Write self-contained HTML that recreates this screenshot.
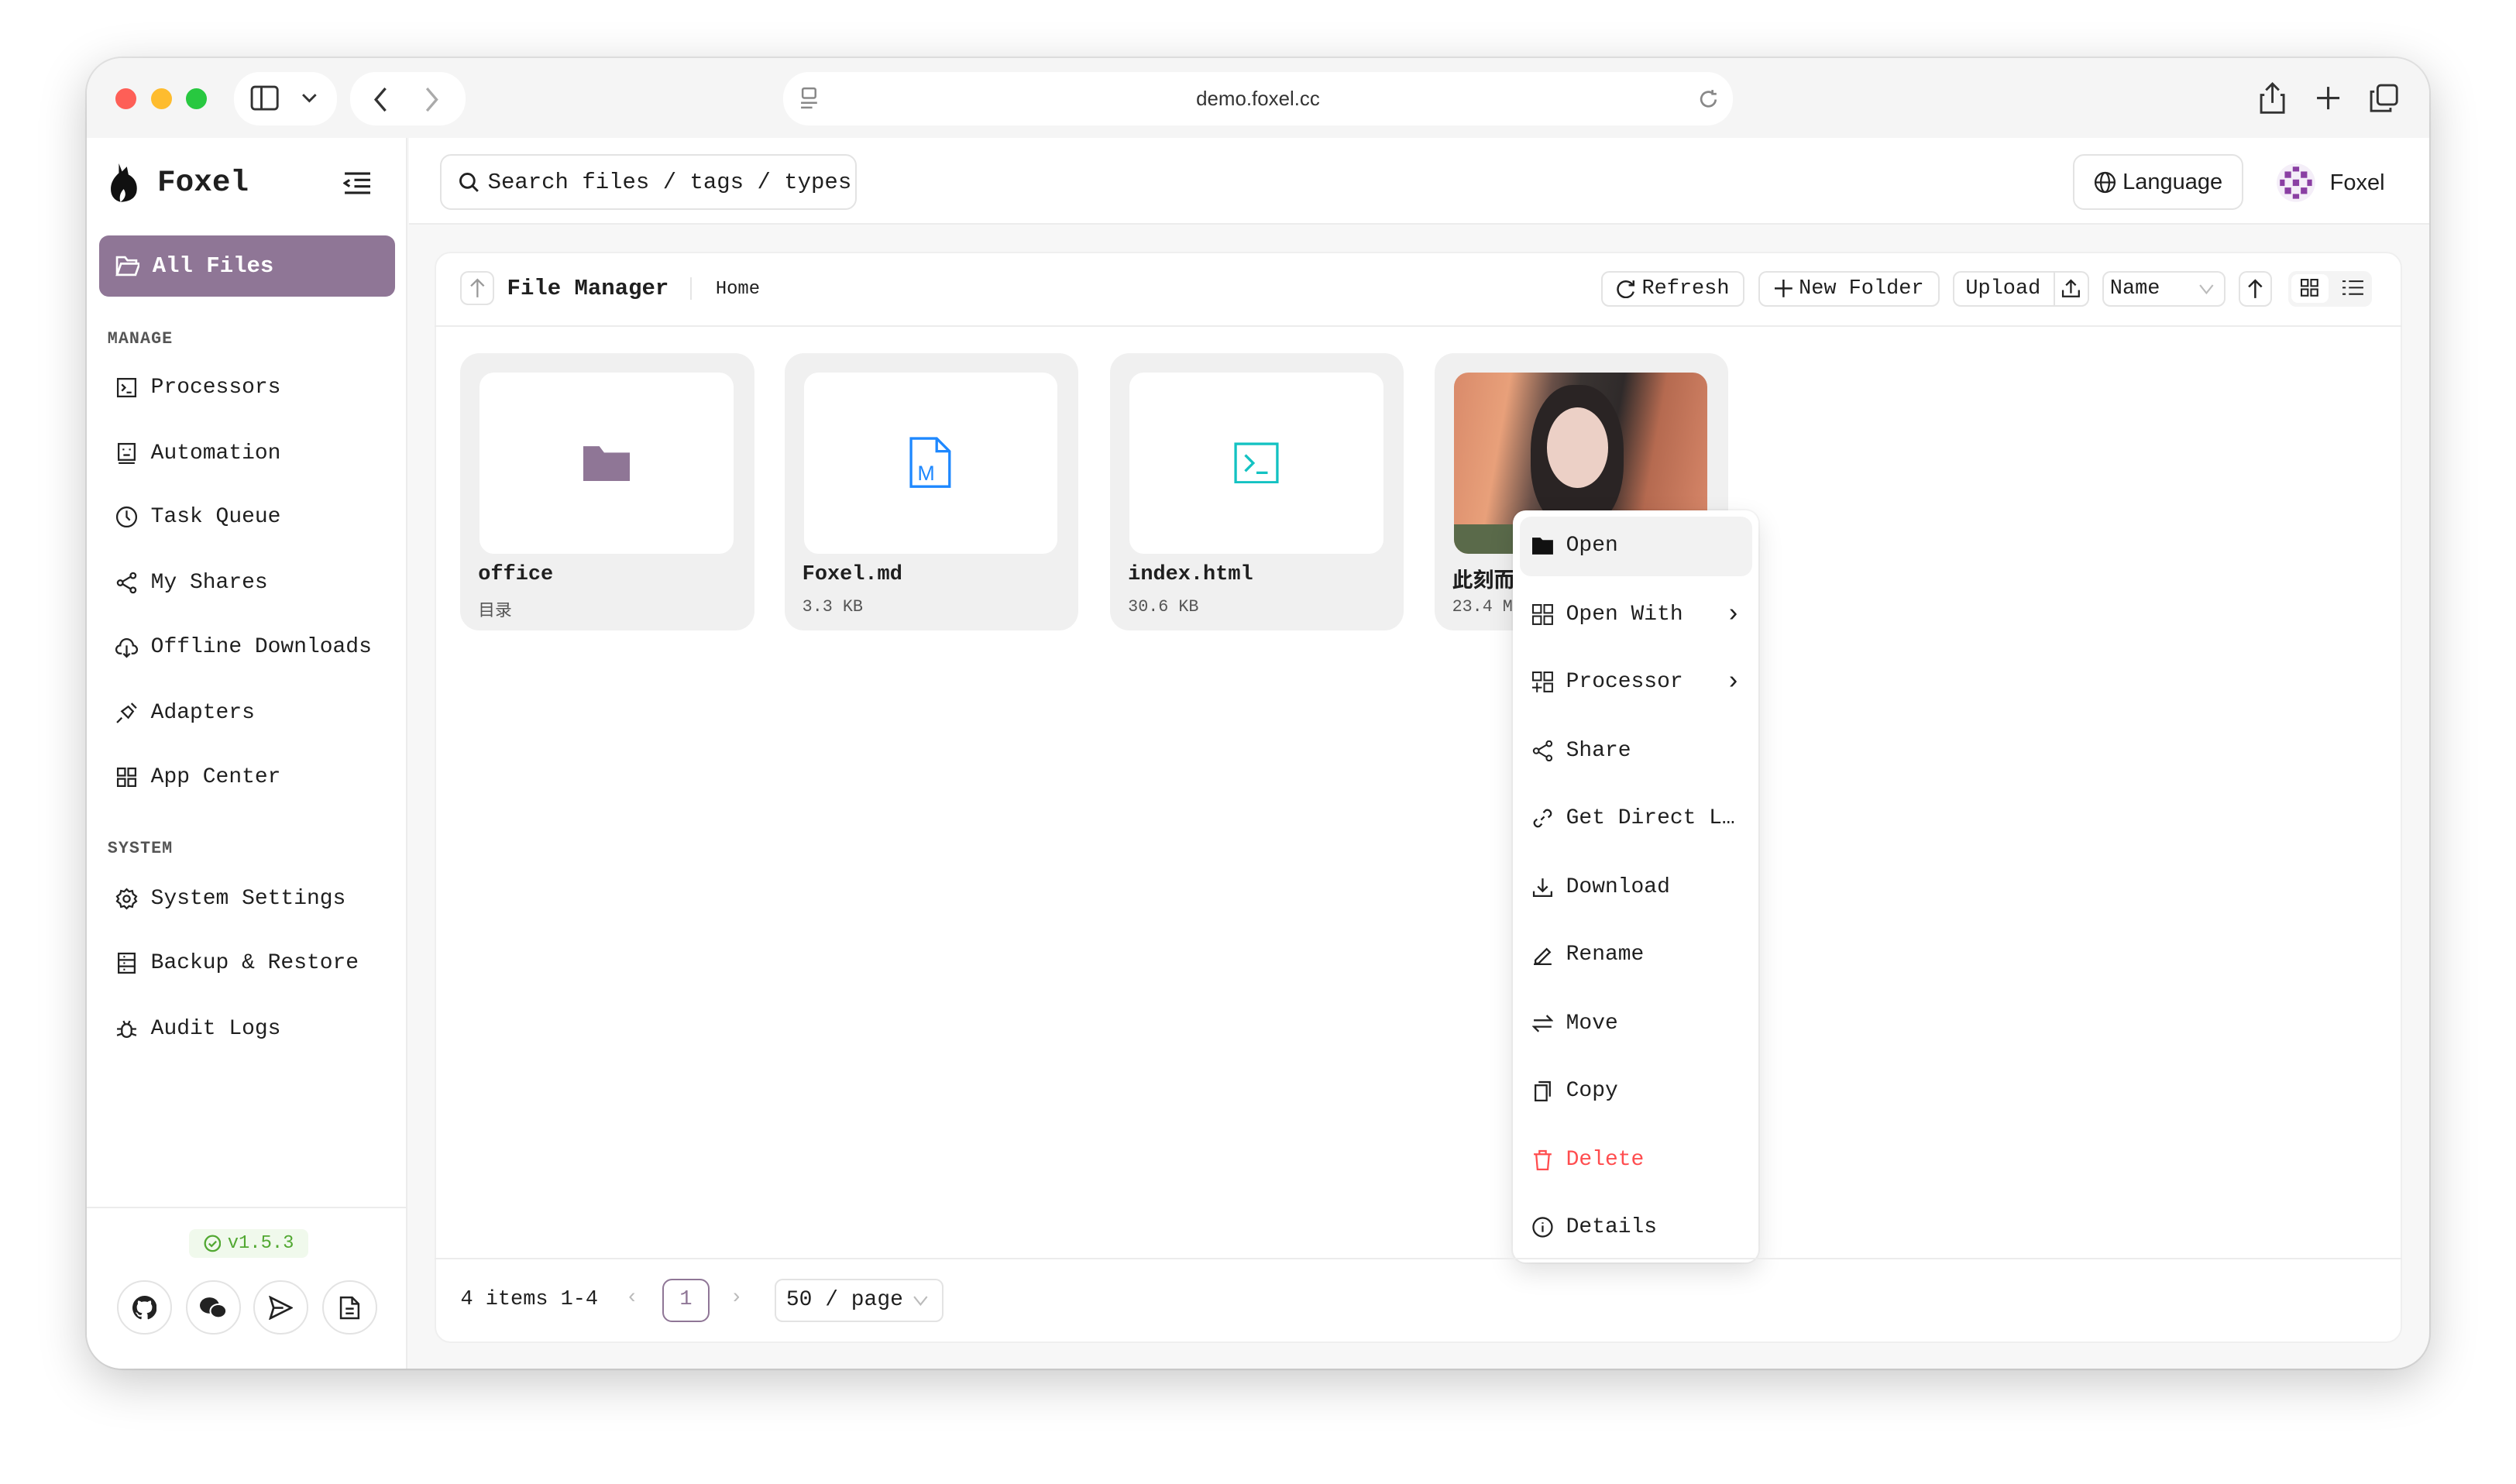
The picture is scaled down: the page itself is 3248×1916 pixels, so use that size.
<!DOCTYPE html>
<html><head><meta charset="utf-8"><style>
*{box-sizing:border-box;margin:0;padding:0}
html,body{width:3248px;height:1916px;background:#fff;overflow:hidden}
#z{zoom:2.0714;width:1568px;height:925px;position:relative;font-family:"Liberation Mono","Noto Sans CJK SC",monospace;color:#1f1f1f}
.a{position:absolute}
.win{left:54px;top:36px;width:1460px;height:817px;border-radius:22px;background:#f7f7f7;box-shadow:0 8px 30px rgba(0,0,0,.22),0 0 0 1px rgba(0,0,0,.08);overflow:hidden}
.tb{left:0;top:0;width:1460px;height:50px;background:#f5f5f5}
.dot{width:13px;height:13px;border-radius:50%;top:19px}
.pill{background:#fff;border-radius:16px;height:33px;top:9px}
.side{left:0;top:50px;width:200px;height:767px;background:#fff;border-right:1px solid #ececec}
.ni{left:18px;font-size:13.5px;display:flex;align-items:center;gap:8px}
.ni svg{width:14px;height:14px}
.sec{left:13px;font-size:10.5px;color:#555;font-weight:bold;letter-spacing:.5px}
.btn{border:1px solid #e3e3e3;border-radius:5px;background:#fff;height:22px;font-size:13px;display:flex;align-items:center;justify-content:center;gap:4px}
.card{top:184px;width:183px;height:173px;background:#f0f0f0;border-radius:12px}
.card .th{position:absolute;left:12px;top:12px;width:158px;height:113px;background:#fff;border-radius:9px;display:flex;align-items:center;justify-content:center}
.card .n{position:absolute;left:11px;top:131px;font-size:13px;font-weight:bold}
.card .s{position:absolute;left:11px;top:152px;font-size:10.5px;color:#555}
.mi{left:10px;width:150px;height:38px;font-size:13.5px;display:flex;align-items:center;gap:8px;padding-left:2px}
.mi svg{width:13px;height:13px}
.ch{margin-left:auto;margin-right:18px;font-size:16px}
.ic{width:34px;height:34px;border-radius:50%;border:1px solid #e3e3e3;top:762px;display:flex;align-items:center;justify-content:center;background:#fff}
</style></head><body><div id="z">
<div class="a win">
 <div class="a tb"></div>
 <div class="a dot" style="left:18px;background:#fe5f57"></div>
 <div class="a dot" style="left:40px;background:#febc2e"></div>
 <div class="a dot" style="left:62px;background:#28c840"></div>
 <div class="a pill" style="left:92px;width:64px"><svg class="a" style="left:10px;top:8px" width="18" height="16" viewBox="0 0 18 16" fill="none" stroke="#333" stroke-width="1.4"><rect x="1" y="1" width="16" height="14" rx="2"/><path d="M7 1v14"/></svg><svg class="a" style="left:42px;top:12px" width="10" height="8"><path d="M1 2l4 4 4-4" stroke="#333" stroke-width="1.4" fill="none"/></svg></div>
 <div class="a pill" style="left:164px;width:72px"><svg class="a" style="left:14px;top:9px" width="10" height="16"><path d="M8 1L2 8l6 7" stroke="#333" stroke-width="1.6" fill="none"/></svg><svg class="a" style="left:46px;top:9px" width="10" height="16"><path d="M2 1l6 7-6 7" stroke="#aaa" stroke-width="1.6" fill="none"/></svg></div>
 <div class="a pill" style="left:434px;width:592px"><div class="a" style="left:0;width:592px;top:10px;text-align:center;font-family:'Liberation Sans',sans-serif;font-size:12.5px;color:#333">demo.foxel.cc</div><svg class="a" style="left:10px;top:9px" width="12" height="14" fill="none" stroke="#888" stroke-width="1.2"><rect x="2" y="1" width="8" height="6" rx="1"/><path d="M1 10h10M1 13h7"/></svg><svg class="a" style="left:570px;top:10px" width="13" height="13" fill="none" stroke="#888" stroke-width="1.3"><path d="M11 7a4.5 4.5 0 1 1-2-4M9 1v2.5h2.5"/></svg></div>
 <svg class="a" style="left:1354px;top:15px" width="16" height="20" fill="none" stroke="#333" stroke-width="1.4"><path d="M8 1v12M4 5l4-4 4 4M3 8H1v11h14V8h-2"/></svg>
 <svg class="a" style="left:1389px;top:17px" width="16" height="16" stroke="#333" stroke-width="1.5"><path d="M8 1v14M1 8h14"/></svg>
 <svg class="a" style="left:1423px;top:16px" width="18" height="18" fill="none" stroke="#333" stroke-width="1.4"><rect x="5" y="1" width="12" height="12" rx="2"/><path d="M3 5H1v12h12v-2"/></svg>

 <div class="a side">
  <svg class="a" style="left:14px;top:16px" width="20" height="24" viewBox="0 0 20 24"><path d="M6 0l2 5 3-3 1 5c4 2 6 6 5 11-1 4-5 6-10 6 3-2 4-5 2-8-2 2-3 5-2 8-4-1-6-4-6-8 0-5 3-8 5-10z" fill="#111"/></svg>
  <div class="a" style="left:44px;top:17px;font-size:19px;font-weight:bold">Foxel</div>
  <svg class="a" style="left:160px;top:21px" width="17" height="14" stroke="#222" stroke-width="1.5" fill="none"><path d="M1 1h16M7 5h10M7 9h10M1 13h16M4 5L1 7l3 2"/></svg>
  <div class="a" style="left:8px;top:61px;width:184px;height:38px;background:#8f7696;border-radius:6px;color:#fff;font-size:14px;font-weight:bold;display:flex;align-items:center;gap:8px;padding-left:10px"><svg width="15" height="13" fill="none" stroke="#fff" stroke-width="1.3"><path d="M1 12V1h5l1.5 2H13v2M1 12l2.5-7H15l-2.5 7z"/></svg>All Files</div>
  <div class="a sec" style="top:119px">MANAGE</div>
  <div class="a ni" style="top:148px"><svg viewBox="0 0 14 14" fill="none" stroke="#222" stroke-width="1.1"><rect x="1.5" y="1.5" width="11" height="11"/><path d="M4 5l2 2-2 2M7 10h3"/></svg>Processors</div>
  <div class="a ni" style="top:189px"><svg viewBox="0 0 14 14" fill="none" stroke="#222" stroke-width="1.1"><rect x="2" y="1" width="10" height="10"/><path d="M5 4v1M9 4v1M5 8h4M2 13h10"/></svg>Automation</div>
  <div class="a ni" style="top:229px"><svg viewBox="0 0 14 14" fill="none" stroke="#222" stroke-width="1.1"><circle cx="7" cy="7" r="6"/><path d="M7 3v4l2 2"/></svg>Task Queue</div>
  <div class="a ni" style="top:270px"><svg viewBox="0 0 14 14" fill="none" stroke="#222" stroke-width="1.1"><circle cx="3" cy="7" r="1.6"/><circle cx="11" cy="2.5" r="1.6"/><circle cx="11" cy="11.5" r="1.6"/><path d="M4.5 6.2l5-3M4.5 7.8l5 3"/></svg>My Shares</div>
  <div class="a ni" style="top:310px"><svg viewBox="0 0 14 14" fill="none" stroke="#222" stroke-width="1.1"><path d="M4 11H3a2.5 2.5 0 0 1 0-5 4 4 0 0 1 8 0 2.5 2.5 0 0 1 0 5h-1M7 6v7M5 11l2 2 2-2"/></svg>Offline Downloads</div>
  <div class="a ni" style="top:351px"><svg viewBox="0 0 14 14" fill="none" stroke="#222" stroke-width="1.1"><path d="M1 13l3-3M5 7l2 2M8 3l3 3-3 4-4-4zM10 1l3 3"/></svg>Adapters</div>
  <div class="a ni" style="top:391px"><svg viewBox="0 0 14 14" fill="none" stroke="#222" stroke-width="1.1"><rect x="1.5" y="1.5" width="4.5" height="4.5"/><rect x="8" y="1.5" width="4.5" height="4.5"/><rect x="1.5" y="8" width="4.5" height="4.5"/><rect x="8" y="8" width="4.5" height="4.5"/></svg>App Center</div>
  <div class="a sec" style="top:437px">SYSTEM</div>
  <div class="a ni" style="top:467px"><svg viewBox="0 0 14 14" fill="none" stroke="#222" stroke-width="1.1"><circle cx="7" cy="7" r="2"/><path d="M7 1l1.5 1.5 2-.5.5 2L13 5.5 12 7l1 1.5-2 1.5-.5 2-2-.5L7 13l-1.5-1.5-2 .5-.5-2L1 8.5 2 7 1 5.5 3 4l.5-2 2 .5z"/></svg>System Settings</div>
  <div class="a ni" style="top:507px"><svg viewBox="0 0 14 14" fill="none" stroke="#222" stroke-width="1.1"><rect x="2" y="1" width="10" height="12"/><path d="M2 5h10M2 9h10M5 3h1M5 7h1M5 11h1"/></svg>Backup &amp; Restore</div>
  <div class="a ni" style="top:548px"><svg viewBox="0 0 14 14" fill="none" stroke="#222" stroke-width="1.1"><rect x="4" y="4" width="6" height="8" rx="3"/><path d="M5 2l1 2M9 2L8 4M1 7h3M10 7h3M1 11l3-1M13 11l-3-1"/></svg>Audit Logs</div>
  <div class="a" style="left:0;top:666px;width:200px;border-top:1px solid #ececec"></div>
  <div class="a" style="left:64px;top:680px;width:74px;height:18px;background:#f0f9ec;border-radius:4px;color:#52a832;font-size:11.5px;display:flex;align-items:center;justify-content:center;gap:4px"><svg width="11" height="11" fill="none" stroke="#52a832" stroke-width="1.1"><circle cx="5.5" cy="5.5" r="4.7"/><path d="M3.3 5.6l1.6 1.6 2.9-3"/></svg>v1.5.3</div>
 </div>
 <div class="a ic" style="left:19px"><svg width="15" height="15" viewBox="0 0 16 16"><path d="M8 0a8 8 0 0 0-2.5 15.6c.4 0 .5-.2.5-.4v-1.4c-2.2.5-2.7-1-2.7-1-.4-.9-.9-1.2-.9-1.2-.7-.5.1-.5.1-.5.8.1 1.2.8 1.2.8.7 1.2 1.900.9 2.3.7.1-.5.3-.9.5-1.1-1.8-.2-3.6-.9-3.600-4 0-.9.3-1.6.8-2.1-.1-.2-.4-1 .1-2.1 0 0 .7-.2 2.2.8a7.5 7.5 0 0 1 4 0c1.5-1 2.2-.8 2.2-.8.4 1.100.2 1.9.1 2.1.5.6.8 1.3.8 2.1 0 3.1-1.9 3.8-3.6 4 .3.3.6.8.6 1.5v2.2c0 .2.1.5.6.4A8 8 0 0 0 8 0z" fill="#222"/></svg></div>
 <div class="a ic" style="left:62px"><svg width="17" height="15" viewBox="0 0 17 15"><ellipse cx="6" cy="6" rx="6" ry="5" fill="#222"/><ellipse cx="11.5" cy="9.5" rx="5" ry="4.2" fill="#222" stroke="#fff" stroke-width="1"/></svg></div>
 <div class="a ic" style="left:104px"><svg width="15" height="15" fill="none" stroke="#222" stroke-width="1.3"><path d="M1 1l13 6.5L1 14l2-6.5zM3 7.5h6"/></svg></div>
 <div class="a ic" style="left:147px"><svg width="13" height="15" fill="none" stroke="#222" stroke-width="1.2"><path d="M1 1h7l4 4v9H1zM8 1v4h4M4 8h5M4 11h5"/></svg></div>

 <!-- header -->
 <div class="a" style="left:201px;top:50px;width:1259px;height:54px;background:#fff;border-bottom:1px solid #ececec"></div>
 <div class="a btn" style="left:220px;top:60px;width:260px;height:35px;border-radius:7px;font-size:14px;justify-content:flex-start;padding-left:11px;gap:5px"><svg width="13" height="13" fill="none" stroke="#222" stroke-width="1.4"><circle cx="5.5" cy="5.5" r="4.3"/><path d="M8.5 8.5L12 12"/></svg>Search files / tags / types</div>
 <div class="a btn" style="left:1238px;top:60px;width:106px;height:35px;border-radius:7px;font-family:'Liberation Sans',sans-serif;font-size:14px"><svg width="14" height="14" fill="none" stroke="#222" stroke-width="1.1"><circle cx="7" cy="7" r="6"/><ellipse cx="7" cy="7" rx="2.6" ry="6"/><path d="M1 7h12"/></svg>Language</div>
 <svg class="a" style="left:1364px;top:65px" width="26" height="26" viewBox="0 0 26 26"><circle cx="13" cy="13" r="12" fill="#f4eef8"/><g fill="#8a3fa3"><rect x="6" y="6" width="4" height="4"/><rect x="16" y="6" width="4" height="4"/><rect x="11" y="11" width="4" height="4"/><rect x="6" y="16" width="4" height="4"/><rect x="16" y="16" width="4" height="4"/><rect x="11" y="3" width="4" height="3"/><rect x="11" y="20" width="4" height="3"/><rect x="3" y="11" width="3" height="4"/><rect x="20" y="11" width="3" height="4"/></g></svg>
 <div class="a" style="left:1398px;top:70px;font-family:'Liberation Sans',sans-serif;font-size:14px">Foxel</div>

 <!-- content card -->
 <div class="a" style="left:217px;top:121px;width:1226px;height:680px;background:#fff;border-radius:10px;border:1px solid #efefef"></div>
 <div class="a" style="left:217px;top:167px;width:1226px;border-top:1px solid #ececec"></div>
 <div class="a btn" style="left:233px;top:133px;width:21px;height:21px"><svg width="10" height="12" fill="none" stroke="#999" stroke-width="1.1"><path d="M5 12V1M1 5l4-4 4 4"/></svg></div>
 <div class="a" style="left:262px;top:136px;font-size:14px;font-weight:bold">File Manager</div>
 <div class="a" style="left:376px;top:137px;height:14px;border-left:1px solid #e5e5e5"></div>
 <div class="a" style="left:392px;top:138px;font-size:11.5px">Home</div>
 <div class="a btn" style="left:944px;top:133px;width:89px"><svg width="12" height="12" fill="none" stroke="#222" stroke-width="1.2"><path d="M10.5 4A5 5 0 1 0 11 8"/><path d="M11 1v3H8"/></svg>Refresh</div>
 <div class="a btn" style="left:1042px;top:133px;width:113px"><svg width="11" height="11" stroke="#222" stroke-width="1.2"><path d="M5.5 0v11M0 5.5h11"/></svg>New Folder</div>
 <div class="a btn" style="left:1163px;top:133px;width:85px;justify-content:flex-start;padding-left:7px">Upload<span style="border-left:1px solid #e3e3e3;height:20px;margin-left:4px"></span><svg width="12" height="12" fill="none" stroke="#222" stroke-width="1.1"><path d="M6 9V1M3 4l3-3 3 3M1 7v4h10V7"/></svg></div>
 <div class="a btn" style="left:1256px;top:133px;width:77px;justify-content:flex-start;padding-left:4px">Name<svg style="margin-left:20px" width="10" height="7" fill="none" stroke="#bbb"><path d="M1 1l4 5 4-5"/></svg></div>
 <div class="a btn" style="left:1341px;top:133px;width:21px"><svg width="10" height="12" fill="none" stroke="#222" stroke-width="1.2"><path d="M5 12V1M1 5l4-4 4 4"/></svg></div>
 <div class="a" style="left:1372px;top:133px;width:52px;height:22px;background:#f4f4f4;border-radius:5px"></div>
 <div class="a" style="left:1374px;top:135px;width:23px;height:18px;background:#fff;border-radius:4px"></div>
 <svg class="a" style="left:1380px;top:138px" width="11" height="11" fill="none" stroke="#222"><rect x=".5" y=".5" width="4" height="4"/><rect x="6.5" y=".5" width="4" height="4"/><rect x=".5" y="6.5" width="4" height="4"/><rect x="6.5" y="6.5" width="4" height="4"/></svg>
 <svg class="a" style="left:1406px;top:138px" width="13" height="11" stroke="#222"><path d="M4 1.5h9M4 5.5h9M4 9.5h9M0 1.5h2M0 5.5h2M0 9.5h2"/></svg>

 <div class="a card" style="left:233px"><div class="th"><svg width="29" height="23" viewBox="0 0 29 23"><path d="M0 1h10l3 4h16v18H0z" fill="#8f7696"/></svg></div><div class="n">office</div><div class="s">目录</div></div>
 <div class="a card" style="left:435px"><div class="th"><svg width="26" height="32" viewBox="0 0 26 32" fill="none" stroke="#1e88ff" stroke-width="1.6"><path d="M1 1h16l8 8v22H1zM17 1v8h8"/><text x="5" y="27" font-size="13" fill="#1e88ff" stroke="none" font-family="Liberation Sans">M</text></svg></div><div class="n">Foxel.md</div><div class="s">3.3 KB</div></div>
 <div class="a card" style="left:638px"><div class="th"><svg width="28" height="26" viewBox="0 0 28 26" fill="none" stroke="#13c2c2" stroke-width="1.6"><rect x="1" y="1" width="26" height="24"/><path d="M7 8l5 5-5 5M14 19h7"/></svg></div><div class="n">index.html</div><div class="s">30.6 KB</div></div>
 <div class="a card" style="left:840px"><div class="th" style="background:linear-gradient(100deg,#d98a6a 0%,#e8a07a 20%,#6a5048 35%,#3a3432 45%,#2f2a2a 60%,#b56a50 75%,#d9886a 100%);overflow:hidden"><div style="position:absolute;left:48px;top:8px;width:58px;height:90px;border-radius:45%;background:#2a2424"></div><div style="position:absolute;left:58px;top:22px;width:38px;height:50px;border-radius:50%;background:#ecd0c6"></div><div style="position:absolute;left:0;top:95px;width:158px;height:18px;background:#5a6a4a"></div></div><div class="n">此刻而</div><div class="s">23.4 MB</div></div>

 <!-- context menu -->
 <div class="a" style="left:889px;top:282px;width:153px;height:469px;background:#fff;border-radius:8px;box-shadow:0 6px 16px rgba(0,0,0,.12),0 0 0 1px rgba(0,0,0,.03)">
  <div class="a" style="left:4px;top:4px;width:145px;height:37px;background:#f2f2f2;border-radius:7px"></div>
  <div class="a mi" style="top:3px"><svg viewBox="0 0 13 13"><path d="M0 1.5h5l1.5 1.5H13v9H0z" fill="#111"/></svg>Open</div>
  <div class="a mi" style="top:46px"><svg viewBox="0 0 13 13" fill="none" stroke="#222"><rect x=".5" y=".5" width="5" height="5"/><rect x="7.5" y=".5" width="5" height="5"/><rect x=".5" y="7.5" width="5" height="5"/><rect x="7.5" y="7.5" width="5" height="5"/></svg>Open With<span class="ch">›</span></div>
  <div class="a mi" style="top:88px"><svg viewBox="0 0 13 13" fill="none" stroke="#222"><rect x=".5" y=".5" width="5" height="5"/><rect x="7.5" y=".5" width="5" height="5"/><path d="M3 7v6M0 10h6"/><rect x="7.5" y="7.5" width="5" height="5"/></svg>Processor<span class="ch">›</span></div>
  <div class="a mi" style="top:131px"><svg viewBox="0 0 13 13" fill="none" stroke="#222"><circle cx="2.5" cy="6.5" r="1.6"/><circle cx="10.5" cy="2" r="1.6"/><circle cx="10.5" cy="11" r="1.6"/><path d="M4 5.700l5-3M4 7.3l5 3"/></svg>Share</div>
  <div class="a mi" style="top:173px"><svg viewBox="0 0 13 13" fill="none" stroke="#222" stroke-width="1.1"><path d="M5.5 7.5l2-2M7 3l1.5-1.5a2.3 2.3 0 0 1 3 3L10 6M6 10l-1.5 1.5a2.3 2.3 0 0 1-3-3L3 7"/></svg>Get Direct L…</div>
  <div class="a mi" style="top:216px"><svg viewBox="0 0 13 13" fill="none" stroke="#222" stroke-width="1.1"><path d="M6.5 1v8M3.5 6l3 3 3-3M1 9v3h11V9"/></svg>Download</div>
  <div class="a mi" style="top:258px"><svg viewBox="0 0 13 13" fill="none" stroke="#222" stroke-width="1.1"><path d="M2 10l7-7 2 2-7 7H2zM1 12.5h11"/></svg>Rename</div>
  <div class="a mi" style="top:301px"><svg viewBox="0 0 13 13" fill="none" stroke="#222" stroke-width="1.1"><path d="M1 4.5h11L9 1.5M12 8.5H1l3 3"/></svg>Move</div>
  <div class="a mi" style="top:343px"><svg viewBox="0 0 13 13" fill="none" stroke="#222" stroke-width="1.1"><rect x="2" y="3" width="7" height="9.5"/><path d="M4 1h7v9"/></svg>Copy</div>
  <div class="a mi" style="top:386px;color:#ff4d4f"><svg viewBox="0 0 13 13" fill="none" stroke="#ff4d4f" stroke-width="1.1"><path d="M1 3h11M4.5 3V1h4v2M2.5 3l.8 9.5h6.4L10.5 3"/></svg>Delete</div>
  <div class="a mi" style="top:428px"><svg viewBox="0 0 13 13" fill="none" stroke="#222" stroke-width="1.1"><circle cx="6.5" cy="6.5" r="5.8"/><path d="M6.5 5.5v4M6.5 3.5v.8"/></svg>Details</div>
 </div>

 <!-- footer -->
 <div class="a" style="left:217px;top:748px;width:1226px;border-top:1px solid #ececec"></div>
 <div class="a" style="left:233px;top:767px;font-size:13px">4 items 1-4</div>
 <div class="a" style="left:336px;top:766px;font-size:13px;color:#bbb">‹</div>
 <div class="a" style="left:359px;top:761px;width:29px;height:27px;border:1px solid #8f7696;border-radius:6px;color:#8f7696;font-size:13px;text-align:center;line-height:25px">1</div>
 <div class="a" style="left:401px;top:766px;font-size:13px;color:#bbb">›</div>
 <div class="a btn" style="left:429px;top:761px;width:105px;height:27px;justify-content:flex-start;padding-left:6px;font-size:13.5px">50 / page<svg style="margin-left:2px" width="10" height="7" fill="none" stroke="#bbb"><path d="M1 1l4 5 4-5"/></svg></div>
</div>
</div></body></html>
